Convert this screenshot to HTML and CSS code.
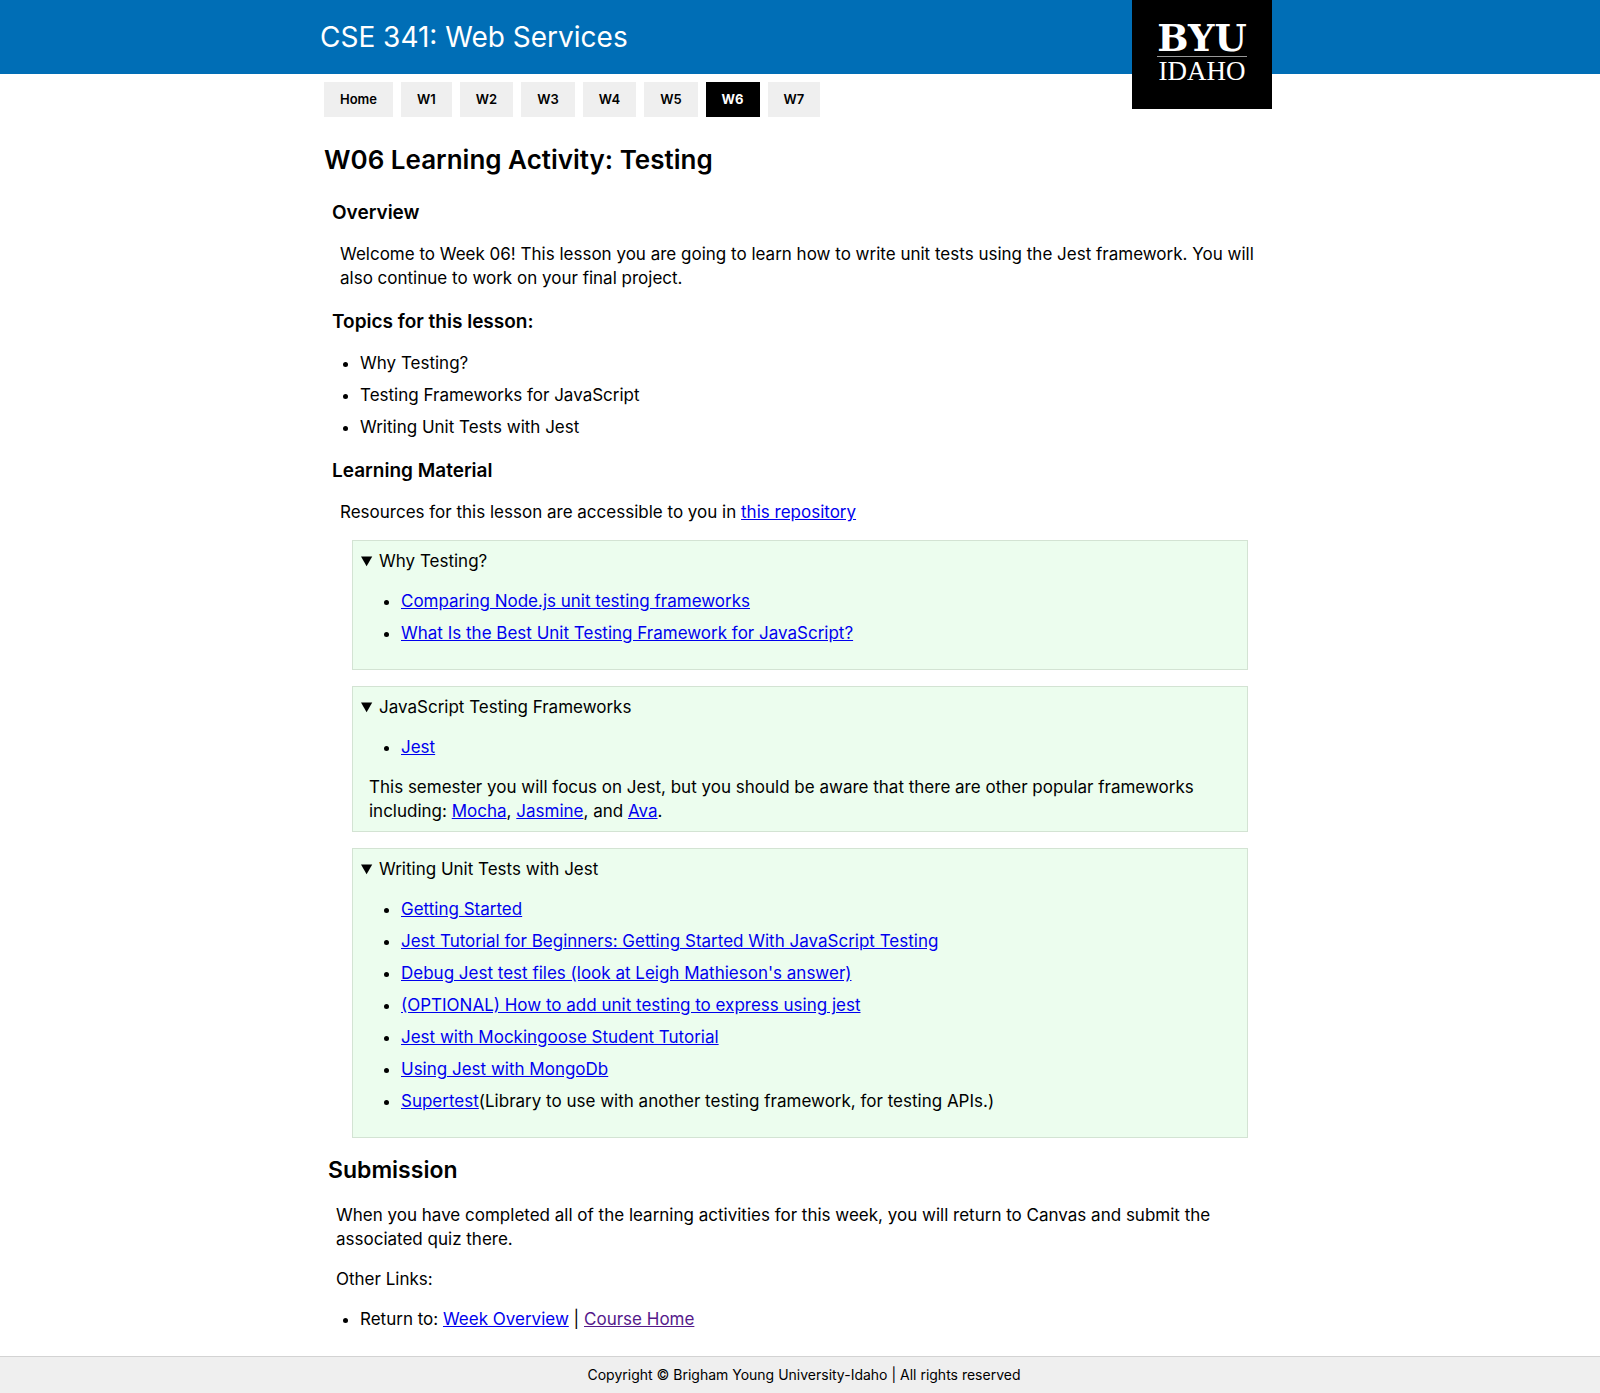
FILE: index.html
```html
<!DOCTYPE html>
<html lang="en">
<head>
<meta charset="utf-8">
<meta name="viewport" content="width=device-width, initial-scale=1">
<title>CSE 341: Web Services</title>
<link rel="stylesheet" href="styles.css">
</head>
<body>
<header class="site-header">
  <div class="header-inner">
    <span class="course-title">CSE 341: Web Services</span>
    <div class="logo">
      <span class="logo-top">BYU</span>
      <span class="logo-bottom">IDAHO</span>
    </div>
  </div>
</header>
<nav class="week-nav">
  <a href="#home">Home</a>
  <a href="#w1">W1</a>
  <a href="#w2">W2</a>
  <a href="#w3">W3</a>
  <a href="#w4">W4</a>
  <a href="#w5">W5</a>
  <a href="#w6" class="active">W6</a>
  <a href="#w7">W7</a>
</nav>
<main class="content">
  <h1>W06 Learning Activity: Testing</h1>
  <section class="lesson">
    <h3>Overview</h3>
    <p>Welcome to Week 06! This lesson you are going to learn how to write unit tests using the Jest framework. You will also continue to work on your final project.</p>
    <h3>Topics for this lesson:</h3>
    <ul class="topics">
      <li>Why Testing?</li>
      <li>Testing Frameworks for JavaScript</li>
      <li>Writing Unit Tests with Jest</li>
    </ul>
    <h3>Learning Material</h3>
    <p>Resources for this lesson are accessible to you in <a href="#repository">this repository</a></p>
    <div class="materials">
      <details open>
        <summary>Why Testing?</summary>
        <ul>
          <li><a href="#comparing">Comparing Node.js unit testing frameworks</a></li>
          <li><a href="#best">What Is the Best Unit Testing Framework for JavaScript?</a></li>
        </ul>
      </details>
      <details open>
        <summary>JavaScript Testing Frameworks</summary>
        <ul>
          <li><a href="#jest">Jest</a></li>
        </ul>
        <p>This semester you will focus on Jest, but you should be aware that there are other popular frameworks including: <a href="#mocha">Mocha</a>, <a href="#jasmine">Jasmine</a>, and <a href="#ava">Ava</a>.</p>
      </details>
      <details open>
        <summary>Writing Unit Tests with Jest</summary>
        <ul>
          <li><a href="#start">Getting Started</a></li>
          <li><a href="#tutorial">Jest Tutorial for Beginners: Getting Started With JavaScript Testing</a></li>
          <li><a href="#debug">Debug Jest test files (look at Leigh Mathieson's answer)</a></li>
          <li><a href="#express">(OPTIONAL) How to add unit testing to express using jest</a></li>
          <li><a href="#mockingoose">Jest with Mockingoose Student Tutorial</a></li>
          <li><a href="#mongodb">Using Jest with MongoDb</a></li>
          <li><a href="#supertest">Supertest</a>(Library to use with another testing framework, for testing APIs.)</li>
        </ul>
      </details>
    </div>
  </section>
  <section class="submission">
    <h2>Submission</h2>
    <p>When you have completed all of the learning activities for this week, you will return to Canvas and submit the associated quiz there.</p>
    <p>Other Links:</p>
    <ul>
      <li>Return to: <a href="#week">Week Overview</a> | <a href="#course" class="seen">Course Home</a></li>
    </ul>
  </section>
</main>
<footer class="site-footer">Copyright © Brigham Young University-Idaho | All rights reserved</footer>
</body>
</html>
```
FILE: styles.css
```css
* { box-sizing: border-box; }

body {
  margin: 0;
  background: #fff;
  color: #000;
  font-family: Inter, "Open Sans", sans-serif;
  font-size: 17px;
  line-height: 24px;
}

h1, h2, h3, p, ul { margin: 0; }
a { color: #00e; }
a.seen { color: #551a8b; }

/* Header */
.site-header { height: 74px; background: #006eb6; }
.header-inner {
  display: flex;
  justify-content: space-between;
  align-items: flex-start;
  max-width: 960px;
  margin: 0 auto;
  padding-right: 8px;
}
.course-title {
  color: #fff;
  font-size: 28px;
  line-height: 74px;
}
.logo {
  display: flex;
  flex-direction: column;
  align-items: center;
  width: 140px;
  height: 109px;
  padding-top: 20px;
  background: #000;
  color: #fff;
}
.logo-top {
  width: 90px;
  height: 37px;
  border-bottom: 1px solid #999;
  font: bold 37px/36px "DejaVu Serif", serif;
  text-align: center;
}
.logo-bottom { font: 27px/28px "Liberation Serif", serif; }

/* Week tabs */
.week-nav {
  display: flex;
  gap: 8px;
  max-width: 960px;
  margin: 8px auto 0;
  padding: 0 4px;
}
.week-nav a {
  padding: 0 16px;
  background: #efefef;
  color: #000;
  font-size: 13px;
  font-weight: 600;
  line-height: 35px;
  text-decoration: none;
}
.week-nav .active { background: #000; color: #fff; font-weight: 700; }

/* Main column */
.content {
  max-width: 960px;
  margin: 0 auto;
  padding: 24px 4px;
}
h1 { font-size: 26px; font-weight: 600; line-height: 38px; padding-bottom: 2px; }
h2 { font-size: 23px; font-weight: 600; line-height: 33px; }
h3 { margin: 18px 0 16px; font-size: 19px; font-weight: 600; line-height: 27px; }
.lesson { padding: 0 0 0 8px; }
.lesson > p { padding-left: 8px; }
li + li { margin-top: 8px; }
.topics { padding-left: 28px; }

.materials {
  display: grid;
  gap: 16px;
  margin: 16px 28px 0 20px;
}
details {
  padding: 8px;
  border: 1px solid #d3e3d3;
  background: #ecfdee;
}
details ul { margin: 16px 0; padding-left: 40px; }
details p { padding: 0 8px; }

.submission { padding: 16px 28px 0 4px; }
.submission p { margin-top: 16px; padding-left: 8px; }
.submission ul { margin-top: 16px; padding-left: 32px; }

.site-footer {
  margin-top: 1px;
  border-top: 1px solid #d3d3d3;
  background: #efefef;
  padding-left: 8px;
  font-size: 14px;
  line-height: 36px;
  text-align: center;
}
```
